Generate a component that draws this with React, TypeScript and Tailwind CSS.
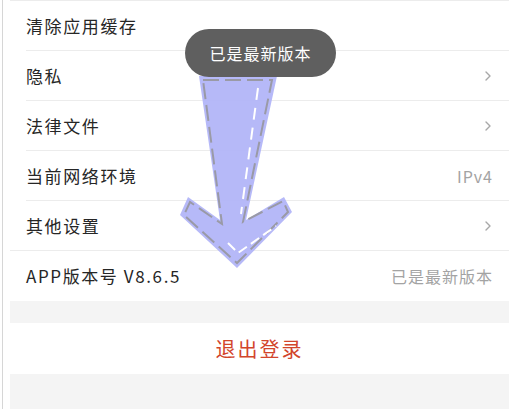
import React from 'react';

type Row = {
  label: string;
  value?: string;
  chevron?: boolean;
  fullDivider?: boolean;
};

const rows: Row[] = [
  { label: '清除应用缓存' },
  { label: '隐私', chevron: true },
  { label: '法律文件', chevron: true },
  { label: '当前网络环境', value: 'IPv4' },
  { label: '其他设置', chevron: true, fullDivider: true },
  { label: 'APP版本号 V8.6.5', value: '已是最新版本' },
];

const Chevron = () => (
  <svg width="8" height="12" viewBox="0 0 8 12" fill="none" className="mr-[1px]">
    <path d="M2 2 L6 6 L2 10" stroke="#a8a8a8" strokeWidth="1.4" strokeLinecap="round" strokeLinejoin="round" />
  </svg>
);

const SettingRow = ({ row, last }: { row: Row; last: boolean }) => (
  <div className="relative h-[50px] flex items-center justify-between pl-4 pr-4">
    <span className="text-[17px] tracking-[1.6px] text-[#262626]">{row.label}</span>
    {row.value ? (
      <span className="text-[16px] tracking-[1px] text-[#a3a3a3]">{row.value}</span>
    ) : null}
    {row.chevron ? <Chevron /> : null}
    {!last && (
      <div
        className={`absolute bottom-0 right-0 h-px bg-[#ececec] ${row.fullDivider ? 'left-0' : 'left-4'}`}
      />
    )}
  </div>
);

// the big pointer drawn over the list
const Arrow = () => (
  <svg className="absolute left-0 top-0 pointer-events-none" width="509" height="409" viewBox="0 0 509 409">
    <polygon
      points="199,76 277,76 246,220 284,197 292,212 237,268 180,215 188,197 220,220"
      fill="#b2b5f8"
      fillOpacity="0.95"
    />
    <polygon
      points="203,80 272,80 243,222 283,201 288,212 237,263 184,215 190,202 222,224"
      fill="none"
      stroke="#9a9aa6"
      strokeWidth="2"
      strokeDasharray="16 6"
    />
    <polyline points="258,88 241,214" fill="none" stroke="#ffffff" strokeWidth="2" strokeDasharray="12 8" />
    <polyline points="228,243 238,253 276,226" fill="none" stroke="#ffffff" strokeWidth="2" strokeDasharray="10 5" />
  </svg>
);

const App = () => {
  return (
    <div
      className="relative w-[509px] h-[409px] overflow-hidden bg-white flex"
      style={{ fontFamily: '"Noto Sans CJK SC", "Noto Sans", sans-serif' }}
    >
      <div className="w-[2px] shrink-0" />
      <div className="w-px shrink-0 bg-[#d6d6d6]" />
      <div className="w-[7px] shrink-0" />
      <div className="flex-1 flex flex-col">
        <div className="h-px bg-[#ececec]" />
        {rows.map((row, i) => (
          <SettingRow key={row.label} row={row} last={i === rows.length - 1} />
        ))}
        <div className="h-[22px] bg-[#f4f4f4]" />
        <div className="h-[51px] flex items-center justify-center">
          <span className="text-[20px] tracking-[2px] text-[#d2452b]">退出登录</span>
        </div>
        <div className="flex-1 bg-[#f4f4f4]" />
      </div>

      <Arrow />

      <div className="absolute left-[185px] top-[29px] w-[151px] h-[48px] rounded-full bg-[#5f5f5f] flex items-center justify-center">
        <span className="text-[16px] tracking-[1px] text-white">已是最新版本</span>
      </div>
    </div>
  );
};

export default App;
